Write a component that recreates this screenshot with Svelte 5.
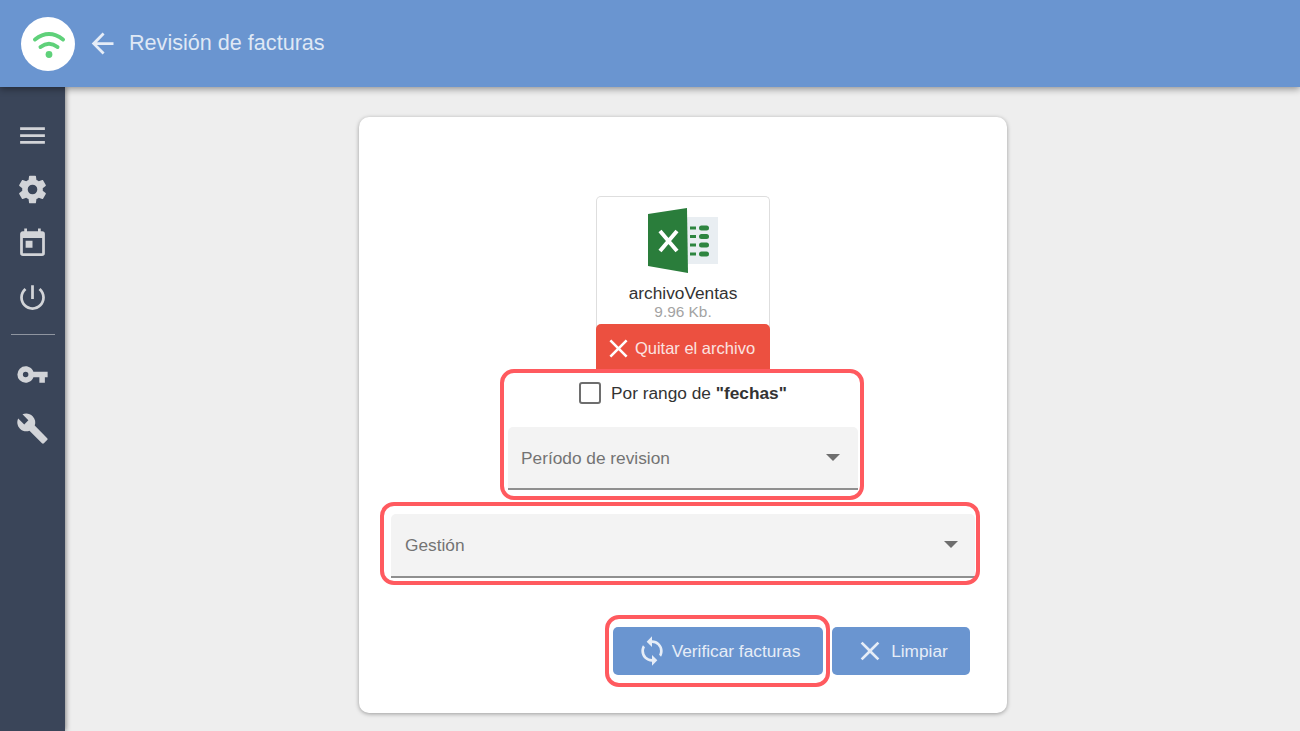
<script>
  const paths = {
    menu: 'M3,6H21V8H3V6M3,11H21V13H3V11M3,16H21V18H3V16Z',
    cog: 'M12,15.5A3.5,3.5 0 0,1 8.5,12A3.5,3.5 0 0,1 12,8.5A3.5,3.5 0 0,1 15.5,12A3.5,3.5 0 0,1 12,15.5M19.43,12.97C19.47,12.65 19.5,12.33 19.5,12C19.5,11.67 19.47,11.34 19.43,11L21.54,9.37C21.73,9.22 21.78,8.95 21.66,8.73L19.66,5.27C19.54,5.05 19.27,4.96 19.05,5.05L16.56,6.05C16.04,5.66 15.5,5.32 14.87,5.07L14.5,2.42C14.46,2.18 14.25,2 14,2H10C9.75,2 9.54,2.18 9.5,2.42L9.13,5.07C8.5,5.32 7.96,5.66 7.44,6.05L4.95,5.05C4.73,4.96 4.46,5.05 4.34,5.27L2.34,8.73C2.21,8.95 2.27,9.22 2.46,9.37L4.57,11C4.53,11.34 4.5,11.67 4.5,12C4.5,12.33 4.53,12.65 4.57,12.97L2.46,14.63C2.27,14.78 2.21,15.05 2.34,15.27L4.34,18.73C4.46,18.95 4.73,19.03 4.95,18.95L7.44,17.94C7.96,18.34 8.5,18.68 9.13,18.93L9.5,21.58C9.54,21.82 9.75,22 10,22H14C14.25,22 14.46,21.82 14.5,21.58L14.87,18.93C15.5,18.67 16.04,18.34 16.56,17.94L19.05,18.95C19.27,19.03 19.54,18.95 19.66,18.73L21.66,15.27C21.78,15.05 21.73,14.78 21.54,14.63L19.43,12.97Z',
    calendar: 'M7,10H12V15H7M19,19H5V8H19M19,3H18V1H16V3H8V1H6V3H5C3.89,3 3,3.9 3,5V19A2,2 0 0,0 5,21H19A2,2 0 0,0 21,19V5A2,2 0 0,0 19,3Z',
    power: 'M13 3h-2v10h2V3zm4.83 2.17l-1.42 1.42C17.99 7.86 19 9.81 19 12c0 3.87-3.13 7-7 7s-7-3.13-7-7c0-2.19 1.01-4.14 2.58-5.42L6.17 5.17C4.23 6.82 3 9.26 3 12c0 4.97 4.03 9 9 9s9-4.03 9-9c0-2.74-1.23-5.18-3.17-6.83z',
    key: 'M7,14A2,2 0 0,1 5,12A2,2 0 0,1 7,10A2,2 0 0,1 9,12A2,2 0 0,1 7,14M12.65,10C11.83,7.67 9.61,6 7,6A6,6 0 0,0 1,12A6,6 0 0,0 7,18C9.61,18 11.83,16.33 12.65,14H17V18H21V14H23V10H12.65Z',
    wrench: 'M22.7,19L13.6,9.9C14.5,7.6 14,4.9 12.1,3C10.1,1 7.1,0.6 4.7,1.7L9,6L6,9L1.6,4.7C0.4,7.1 0.9,10.1 2.9,12.1C4.8,14 7.5,14.5 9.8,13.6L18.9,22.7C19.3,23.1 19.9,23.1 20.3,22.7L22.6,20.4C23.1,20 23.1,19.3 22.7,19Z',
    back: 'M20,11V13H8L13.5,18.5L12.08,19.92L4.16,12L12.08,4.08L13.5,5.5L8,11H20Z',
    close: 'M19,6.41L17.59,5L12,10.59L6.41,5L5,6.41L10.59,12L5,17.59L6.41,19L12,13.41L17.59,19L19,17.59L13.41,12L19,6.41Z',
    sync: 'M12,18A6,6 0 0,1 6,12C6,11 6.25,10.03 6.7,9.2L5.24,7.74C4.46,8.97 4,10.43 4,12A8,8 0 0,0 12,20V23L16,19L12,15M12,4V1L8,5L12,9V6A6,6 0 0,1 18,12C18,13 17.75,13.97 17.3,14.8L18.76,16.26C19.54,15.03 20,13.57 20,12A8,8 0 0,0 12,4Z'
  };
  const topItems = ['menu', 'cog', 'calendar', 'power'];
  const bottomItems = ['key', 'wrench'];
  const dashRows = [226, 234.5, 243, 252];
</script>

{#snippet icon(name)}
  <svg class="icon" viewBox="0 0 24 24" aria-hidden="true"><path d={paths[name]} /></svg>
{/snippet}

<div class="page">
  <header class="topbar">
    <div class="logo">
      <svg viewBox="0 0 54 54" width="54" height="54" aria-hidden="true">
        <path d="M14 22.5 Q28 11.5 42 22.5" class="wave" />
        <path d="M19.5 30 Q28 23.5 36.5 30" class="wave" />
        <circle cx="28" cy="37.5" r="3.4" fill="#5fd17a" />
      </svg>
    </div>
    <button class="back">{@render icon('back')}</button>
    <h1>Revisión de facturas</h1>
  </header>

  <div class="body">
    <nav class="sidebar">
      {#each topItems as item}
        <div class="nav-item">{@render icon(item)}</div>
      {/each}
      <hr />
      {#each bottomItems as item}
        <div class="nav-item">{@render icon(item)}</div>
      {/each}
    </nav>

    <main>
      <section class="card">
        <div class="file">
          <svg class="excel" viewBox="648 207 70 65" width="70" height="65" aria-hidden="true">
            <rect x="686" y="216" width="32" height="47" fill="#e9eef2" />
            {#each dashRows as y}
              <rect x="690" y={y - 0.5} width="6" height="3" fill="#2e8540" />
              <rect x="699" y={y - 1.5} width="10" height="5" rx="2.5" fill="#2e8540" />
            {/each}
            <path d="M648 213 L687 207 L688 272 L648 265 Z" fill="#2a7d3b" />
            <path d="M660 230 L677 250 M677 230 L660 250" stroke="#fff" stroke-width="4" fill="none" />
          </svg>
          <div class="file-name">archivoVentas</div>
          <div class="file-size">9.96 Kb.</div>
          <button class="remove">{@render icon('close')}<span>Quitar el archivo</span></button>
        </div>

        <div class="range marked">
          <label class="check">
            <span class="box"></span>
            <span>Por rango de <b>"fechas"</b></span>
          </label>
          <div class="select">
            <span>Período de revision</span>
            <i class="caret"></i>
          </div>
        </div>

        <div class="year marked">
          <div class="select">
            <span>Gestión</span>
            <i class="caret"></i>
          </div>
        </div>

        <div class="actions">
          <div class="verify marked">
            <button class="primary wide">{@render icon('sync')}<span>Verificar facturas</span></button>
          </div>
          <button class="primary">{@render icon('close')}<span>Limpiar</span></button>
        </div>
      </section>
    </main>
  </div>
</div>

<style>
  :global(body) {
    margin: 0;
    background: #eeeeee;
    font-family: "Liberation Sans", Arial, sans-serif;
    overflow: hidden;
  }

  .page {
    height: 731px;
    display: flex;
    flex-direction: column;
    overflow: hidden;
  }

  .topbar {
    height: 87px;
    flex-shrink: 0;
    background: #6a95d0;
    display: flex;
    align-items: center;
    padding-left: 21px;
    box-shadow: 0 2px 7px rgba(0, 0, 0, 0.4);
    position: relative;
    z-index: 2;
  }

  .logo {
    width: 54px;
    height: 54px;
    border-radius: 50%;
    background: #fff;
    display: flex;
  }

  .wave {
    fill: none;
    stroke: #5fd17a;
    stroke-width: 4;
    stroke-linecap: round;
  }

  .icon {
    display: block;
    fill: currentColor;
  }

  button {
    border: 0;
    padding: 0;
    background: none;
    font: inherit;
    color: inherit;
  }

  .back {
    color: #e6edf7;
    margin-left: 11px;
  }

  .back .icon {
    width: 33px;
    height: 33px;
  }

  h1 {
    margin: 0 0 2px 10px;
    font-size: 21.6px;
    font-weight: 400;
    color: #dfe8f5;
  }

  .body {
    flex: 1;
    display: flex;
    min-height: 0;
  }

  .sidebar {
    width: 65px;
    flex-shrink: 0;
    background: #3a4559;
    box-shadow: 1px 0 5px rgba(0, 0, 0, 0.45);
    color: #d2d4d8;
    padding-top: 21px;
    box-sizing: border-box;
    display: flex;
    flex-direction: column;
    align-items: center;
  }

  .nav-item {
    height: 54px;
    display: flex;
    align-items: center;
  }

  .nav-item .icon {
    width: 33px;
    height: 33px;
  }

  hr {
    width: 44px;
    height: 1px;
    border: 0;
    background: #8f95a0;
    margin: 10px 0 12px;
  }

  main {
    flex: 1;
    display: flex;
    justify-content: center;
    padding: 30px 0 0 1px;
  }

  .card {
    width: 648px;
    height: 596px;
    box-sizing: border-box;
    background: #fff;
    border-radius: 10px;
    box-shadow: 0 1px 4px rgba(0, 0, 0, 0.35);
    padding-top: 79px;
    display: flex;
    flex-direction: column;
    align-items: center;
  }

  .file {
    width: 174px;
    height: 176px;
    box-sizing: border-box;
    border: 1px solid #dedede;
    border-bottom: 0;
    border-radius: 5px 5px 0 0;
    display: flex;
    flex-direction: column;
    align-items: center;
    padding-top: 11px;
  }

  .excel {
    display: block;
    flex-shrink: 0;
  }

  .file-name {
    margin-top: 11px;
    font-size: 17.3px;
    line-height: 19px;
    color: #333;
  }

  .file-size {
    font-size: 15.4px;
    line-height: 17px;
    color: #a3a3a3;
  }

  .remove {
    margin: auto -1px 0;
    width: 174px;
    height: 48px;
    background: #ec5040;
    color: #fbe3e0;
    border-radius: 5px 5px 0 0;
    font-size: 16.5px;
    display: flex;
    align-items: center;
    justify-content: center;
  }

  .remove .icon {
    width: 31px;
    height: 31px;
    margin-left: -8px;
    margin-right: 1px;
    color: #fff;
  }

  .marked {
    position: relative;
  }

  .marked::after {
    content: '';
    position: absolute;
    border: 4px solid #ff5a5f;
    border-radius: 14px;
    pointer-events: none;
  }

  .range {
    width: 350px;
    height: 118px;
    display: flex;
    flex-direction: column;
    justify-content: flex-end;
  }

  .range::after {
    inset: -3px -6px -10px -8px;
  }

  .check {
    display: flex;
    align-items: center;
    justify-content: center;
    gap: 10px;
    font-size: 17.3px;
    color: #333;
    margin-bottom: 23px;
  }

  .box {
    width: 18px;
    height: 18px;
    border: 2.5px solid #6e6e6e;
    border-radius: 3px;
  }

  .select {
    height: 63px;
    box-sizing: border-box;
    background: #f3f3f3;
    border-bottom: 2px solid #8f8f8f;
    border-radius: 5px 5px 0 0;
    padding: 2px 18px 0 13px;
    display: flex;
    align-items: center;
    justify-content: space-between;
    font-size: 17.3px;
    color: #737373;
  }

  .caret {
    width: 0;
    height: 0;
    border-left: 7px solid transparent;
    border-right: 7px solid transparent;
    border-top: 7px solid #6e6e6e;
    margin-bottom: 3px;
  }

  .year {
    width: 584px;
    margin-top: 24px;
  }

  .year .select {
    height: 64px;
    padding: 0 17px 0 14px;
  }

  .year .caret {
    margin-bottom: 1px;
  }

  .year::after {
    inset: -12px -5px -7px -11px;
  }

  .actions {
    align-self: flex-end;
    margin: 49px 37px 0 0;
    display: flex;
    gap: 9px;
  }

  .verify::after {
    inset: -12px -7px -12px -8px;
  }

  .primary {
    height: 48px;
    width: 138px;
    background: #6a95d0;
    color: #e6edf7;
    border-radius: 5px;
    font-size: 17.3px;
    display: flex;
    align-items: center;
    justify-content: center;
    gap: 5px;
  }

  .primary.wide {
    width: 210px;
    gap: 4px;
  }

  .primary .icon {
    width: 32px;
    height: 32px;
  }
</style>
